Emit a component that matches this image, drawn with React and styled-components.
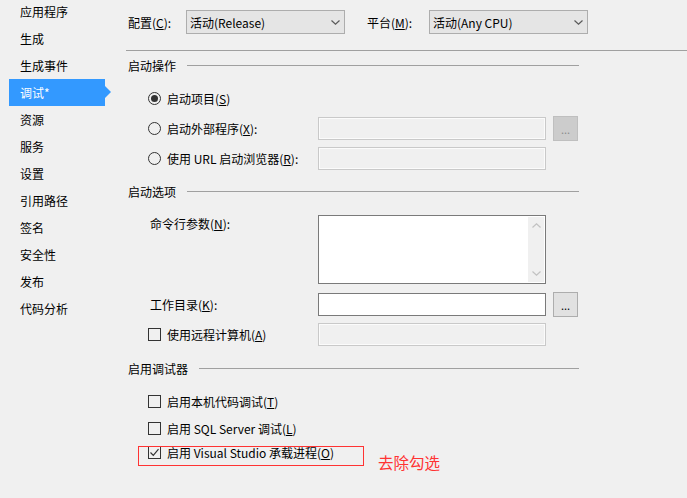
import React from "react";
import styled, { createGlobalStyle } from "styled-components";

const GlobalStyle = createGlobalStyle`
  html, body {
    margin: 0;
    padding: 0;
    background: #f0f0f0;
    overflow: hidden;
  }
  body {
    font-family: "Segoe UI", "Noto Sans CJK SC", sans-serif;
    font-size: 12px;
    color: #000;
  }
`;

const Page = styled.div`
  display: flex;
  width: 687px;
  height: 498px;
  overflow: hidden;
`;

const Sidebar = styled.ul`
  list-style: none;
  margin: -2px 0 0 0;
  padding: 0;
  width: 116px;
  flex-shrink: 0;
`;

const NavItem = styled.li`
  position: relative;
  display: flex;
  align-items: center;
  height: 27px;
  width: 96px;
  margin-left: 9px;
  padding-left: 11px;
  box-sizing: border-box;
  background: ${(p) => (p.$active ? "#3399ff" : "transparent")};
  color: ${(p) => (p.$active ? "#fff" : "#000")};

  &::after {
    content: "";
    display: ${(p) => (p.$active ? "block" : "none")};
    position: absolute;
    right: -6px;
    top: 7px;
    border-left: 6px solid #3399ff;
    border-top: 6px solid transparent;
    border-bottom: 6px solid transparent;
  }
`;

const Main = styled.div`
  flex: 1;
  padding: 10px 0 0 10px;
  display: flex;
  flex-direction: column;
`;

const TopRow = styled.div`
  display: flex;
  align-items: center;
  height: 24px;
  padding-left: 2px;
`;

const TopLabel = styled.span`
  width: ${(p) => p.$w}px;
`;

const Select = styled.div`
  display: flex;
  align-items: center;
  justify-content: space-between;
  width: 159px;
  height: 24px;
  box-sizing: border-box;
  padding: 0 4px 0 3px;
  background: #e5e5e5;
  border: 1px solid #adadad;
  margin-right: ${(p) => p.$mr || 0}px;
`;

const Separator = styled.div`
  height: 1px;
  background: #a0a0a0;
  margin-top: 16px;
`;

const GroupHeader = styled.div`
  display: flex;
  align-items: center;
  height: 20px;
  width: 453px;
  box-sizing: border-box;
  padding-left: 2px;
  margin-top: ${(p) => p.$mt}px;

  &::after {
    content: "";
    flex: 1;
    height: 1px;
    background: #a0a0a0;
    margin-left: 11px;
  }
`;

const Row = styled.div`
  position: relative;
  display: grid;
  grid-template-columns: 185px 228px 25px;
  column-gap: 7px;
  align-items: ${(p) => (p.$top ? "start" : "center")};
  height: ${(p) => p.$h || 22}px;
  margin-top: ${(p) => p.$mt}px;
`;

const Choice = styled.label`
  display: flex;
  align-items: center;
  gap: 6px;
  padding-left: 22px;
  white-space: nowrap;
`;

const TextLabel = styled.span`
  padding-left: 24px;
  line-height: 18px;
  white-space: nowrap;
`;

const Radio = styled.span`
  width: 13px;
  height: 13px;
  box-sizing: border-box;
  border: 1px solid #333;
  border-radius: 50%;
  display: flex;
  align-items: center;
  justify-content: center;
  flex-shrink: 0;

  &::before {
    content: "";
    display: ${(p) => (p.$on ? "block" : "none")};
    width: 7px;
    height: 7px;
    border-radius: 50%;
    background: #333;
  }
`;

const Check = styled.span`
  width: 13px;
  height: 13px;
  box-sizing: border-box;
  border: 1px solid #333;
  display: flex;
  align-items: center;
  justify-content: center;
  flex-shrink: 0;
`;

const TextBox = styled.div`
  height: ${(p) => p.$h || 23}px;
  box-sizing: border-box;
  border: 1px solid ${(p) => (p.$disabled ? "#c9c9c9" : "#7a7a7a")};
  background: ${(p) => (p.$disabled ? "#f0f0f0" : "#fff")};
  box-shadow: ${(p) => (p.$disabled ? "inset 0 0 0 1px #fbfbfb" : "none")};
  display: flex;
  justify-content: flex-end;
  padding: 1px;
`;

const ScrollBar = styled.div`
  width: 16px;
  background: #f0f0f0;
  display: flex;
  flex-direction: column;
  justify-content: space-between;
  align-items: center;
  padding: 6px 0;
`;

const BrowseButton = styled.div`
  width: 25px;
  height: 25px;
  box-sizing: border-box;
  background: ${(p) => (p.$disabled ? "#cccccc" : "#e1e1e1")};
  border: 1px solid ${(p) => (p.$disabled ? "#bfbfbf" : "#adadad")};
  color: ${(p) => (p.$disabled ? "#8c8c8c" : "#000")};
  display: flex;
  align-items: center;
  justify-content: center;
  font-size: 11px;
  line-height: 1;
  padding-top: 2px;
`;

const Key = styled.u`
  text-decoration: underline;
  text-underline-offset: 1px;
`;

const Highlight = styled.div`
  position: absolute;
  left: 12px;
  top: 5px;
  width: 226px;
  height: 20px;
  box-sizing: border-box;
  border: 1px solid #f33;
  pointer-events: none;
`;

const Note = styled.span`
  position: absolute;
  left: 252px;
  top: 11px;
  font-size: 15.5px;
  line-height: 20px;
  color: #f33;
  white-space: nowrap;
`;

const Chevron = ({ up, color = "#5a5a5a" }) => (
  <svg width="9" height="5" viewBox="0 0 9 5">
    <path
      d={up ? "M0.5 4.5 L4.5 0.8 L8.5 4.5" : "M0.5 0.5 L4.5 4.2 L8.5 0.5"}
      fill="none"
      stroke={color}
      strokeWidth="1.2"
    />
  </svg>
);

const Tick = () => (
  <svg width="11" height="11" viewBox="0 0 11 11">
    <path d="M1.5 5.5 L4.3 8.3 L9.5 2.2" fill="none" stroke="#333" strokeWidth="1.2" />
  </svg>
);

const navItems = [
  "应用程序",
  "生成",
  "生成事件",
  "调试*",
  "资源",
  "服务",
  "设置",
  "引用路径",
  "签名",
  "安全性",
  "发布",
  "代码分析",
];

export default function App() {
  return (
    <>
      <GlobalStyle />
      <Page>
        <Sidebar>
          {navItems.map((n) => (
            <NavItem key={n} $active={n === "调试*"}>
              {n}
            </NavItem>
          ))}
        </Sidebar>

        <Main>
          <TopRow>
            <TopLabel $w={58}>
              配置(<Key>C</Key>):
            </TopLabel>
            <Select $mr={22}>
              <span>活动(Release)</span>
              <Chevron />
            </Select>
            <TopLabel $w={62}>
              平台(<Key>M</Key>):
            </TopLabel>
            <Select>
              <span>活动(Any CPU)</span>
              <Chevron />
            </Select>
          </TopRow>

          <Separator />

          <GroupHeader $mt={4}>启动操作</GroupHeader>

          <Row $mt={12}>
            <Choice>
              <Radio $on />
              <span>
                启动项目(<Key>S</Key>)
              </span>
            </Choice>
          </Row>
          <Row $mt={7} $h={23}>
            <Choice>
              <Radio />
              <span>
                启动外部程序(<Key>X</Key>):
              </span>
            </Choice>
            <TextBox $disabled />
            <BrowseButton $disabled>...</BrowseButton>
          </Row>
          <Row $mt={8} $h={23}>
            <Choice>
              <Radio />
              <span>
                使用 URL 启动浏览器(<Key>R</Key>):
              </span>
            </Choice>
            <TextBox $disabled />
          </Row>

          <GroupHeader $mt={11}>启动选项</GroupHeader>

          <Row $mt={14} $top $h={69}>
            <TextLabel>
              命令行参数(<Key>N</Key>):
            </TextLabel>
            <TextBox $h={69}>
              <ScrollBar>
                <Chevron up color="#c2c2c2" />
                <Chevron color="#c2c2c2" />
              </ScrollBar>
            </TextBox>
          </Row>
          <Row $mt={8} $h={23}>
            <TextLabel>
              工作目录(<Key>K</Key>):
            </TextLabel>
            <TextBox />
            <BrowseButton>...</BrowseButton>
          </Row>
          <Row $mt={8} $h={23}>
            <Choice>
              <Check />
              <span>
                使用远程计算机(<Key>A</Key>)
              </span>
            </Choice>
            <TextBox $disabled />
          </Row>

          <GroupHeader $mt={12}>启用调试器</GroupHeader>

          <Row $mt={12}>
            <Choice>
              <Check />
              <span>
                启用本机代码调试(<Key>T</Key>)
              </span>
            </Choice>
          </Row>
          <Row $mt={5}>
            <Choice>
              <Check />
              <span>
                启用 SQL Server 调试(<Key>L</Key>)
              </span>
            </Choice>
          </Row>
          <Row $mt={2}>
            <Choice>
              <Check>
                <Tick />
              </Check>
              <span>
                启用 Visual Studio 承载进程(<Key>O</Key>)
              </span>
            </Choice>
            <Highlight />
            <Note>去除勾选</Note>
          </Row>
        </Main>
      </Page>
    </>
  );
}
